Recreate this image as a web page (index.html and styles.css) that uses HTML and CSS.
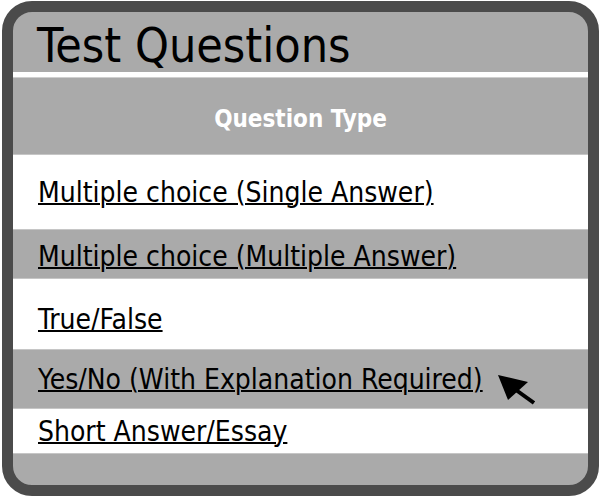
FILE: index.html
```html
<!DOCTYPE html>
<html>
<head>
<meta charset="utf-8">
<link rel="stylesheet" href="styles.css">
</head>
<body>
<div class="panel">
  <div class="title">Test Questions</div>
  <div class="head">Question Type</div>
  <div class="row white r1"><a href="#">Multiple choice (Single Answer)</a></div>
  <div class="row gray r2"><a href="#">Multiple choice (Multiple Answer)</a></div>
  <div class="row white r3"><a href="#">True/False</a></div>
  <div class="row gray r4"><a href="#">Yes/No (With Explanation Required)</a>
    <svg class="cursor" width="40" height="32" viewBox="0 0 40 32"><polygon points="3,2 33,9 13,27" fill="#000"/><line x1="21" y1="17" x2="39" y2="30" stroke="#000" stroke-width="4"/></svg>
  </div>
  <div class="row white r5"><a href="#">Short Answer/Essay</a></div>
  <div class="foot"></div>
</div>
</body>
</html>
```
FILE: styles.css
```css
html, body {
  margin: 0;
  padding: 0;
  background: #ffffff;
}
body {
  font-family: "DejaVu Sans Condensed", "DejaVu Sans", sans-serif;
  font-stretch: condensed;
}
.panel {
  box-sizing: border-box;
  margin: 1px 0 0 2px;
  width: 597px;
  height: 495px;
  border: 11px solid #4b4b4b;
  border-radius: 30px;
  background: #aaaaaa;
  overflow: hidden;
  display: flex;
  flex-direction: column;
}
.title {
  box-sizing: border-box;
  height: 65px;
  padding: 9px 0 0 24px;
  font-size: 48px;
  line-height: 48px;
  color: #000;
  border-bottom: 5px solid #ffffff;
  box-shadow: 0 1px 0 #cfcfcf;
}
.head {
  box-sizing: border-box;
  height: 77px;
  padding-top: 30px;
  text-align: center;
  font-weight: bold;
  font-size: 24px;
  line-height: 24px;
  color: #ffffff;
}
.row {
  box-sizing: border-box;
  display: flex;
  align-items: flex-start;
  padding-left: 25px;
  font-size: 28px;
  line-height: 28px;
  border-top: 1px solid #c6c6c6;
}
.row a {
  color: #000;
  text-decoration: underline;
  text-decoration-thickness: 2px;
}
.white { background: #ffffff; }
.gray { background: #aaaaaa; }
.r1 { height: 75px; padding-top: 24px; }
.r2 { height: 49px; padding-top: 13px; }
.r3 { height: 71px; padding-top: 27px; }
.r4 { height: 59px; padding-top: 16px; }
.r5 { height: 45px; padding-top: 9px; }
.cursor {
  margin: 7px 0 0 12px;
  flex: none;
}
.foot {
  flex: 1;
  border-top: 1px solid #c6c6c6;
}
```
